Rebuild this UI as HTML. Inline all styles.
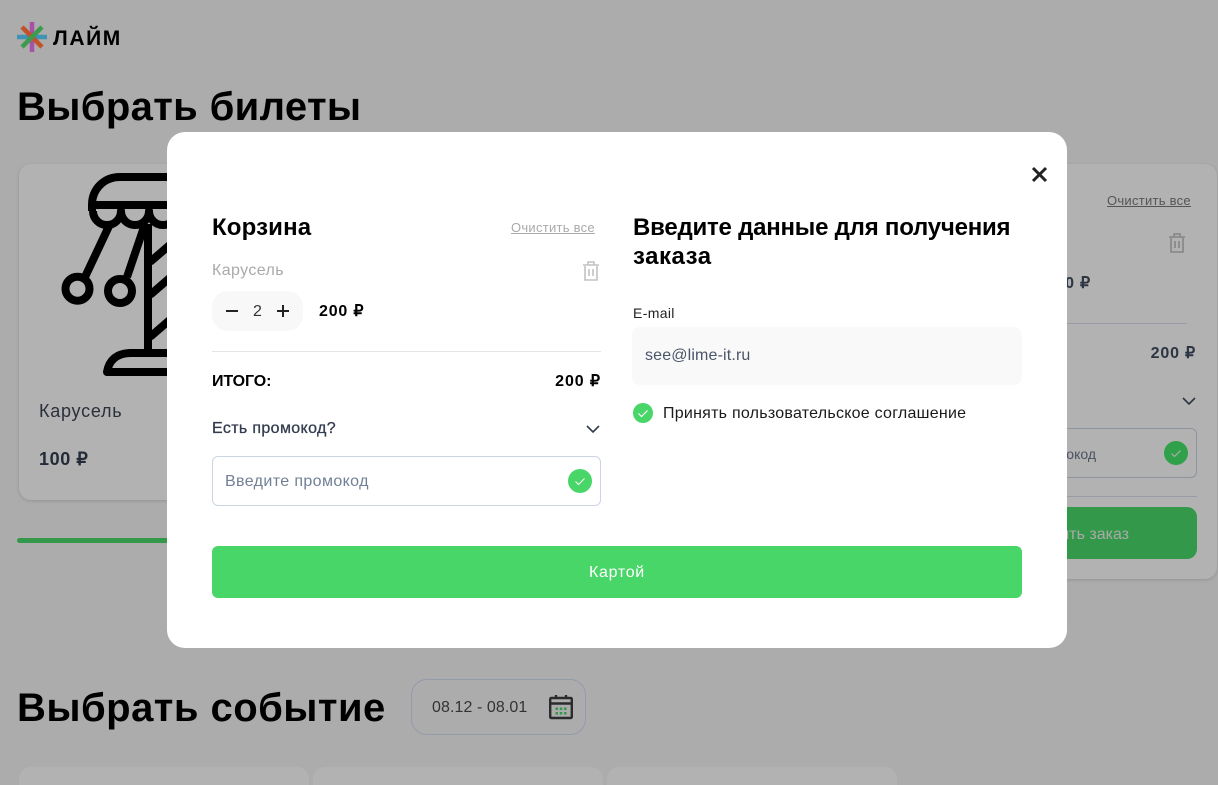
<!DOCTYPE html>
<html lang="ru"><head><meta charset="utf-8"><title>Лайм</title>
<style>
html,body{margin:0;padding:0;height:785px;overflow:hidden}
body{width:1218px;position:relative;background:#acacac;font-family:"Liberation Sans",sans-serif;color:#000}
.t{position:absolute;white-space:nowrap;line-height:1}
.b{position:absolute;box-sizing:border-box}
svg{position:absolute;overflow:visible}
#modal{position:absolute;left:167px;top:132px;width:900px;height:516px;background:#fff;border-radius:18px}
</style></head><body>

<svg style="left:0;top:0" width="60" height="60" viewBox="0 0 60 60"><g fill="none" stroke-width="4.5">
<path d="M32 22V52" stroke="#a851a8"/><path d="M17 37H47" stroke="#3f94b4"/><path d="M22 27L42 47" stroke="#c2522a"/><path d="M22 47L42 27" stroke="#3d9a4e"/></g></svg>
<div class="t" style="left:53px;top:28px;font-size:21px;font-weight:700;letter-spacing:1.6px">ЛАЙМ</div>
<div class="t" style="left:17px;top:87px;font-size:40px;font-weight:700;letter-spacing:.36px">Выбрать билеты</div>

<div class="b" style="left:19px;top:164px;width:300px;height:336px;background:#b2b2b2;border-radius:12px;box-shadow:0 1px 3px rgba(0,0,0,.15)"></div>
<svg style="left:0;top:0" width="180" height="400" viewBox="0 0 180 400"><g fill="none" stroke="#000" stroke-width="8" stroke-linejoin="round">
<path d="M175 177H120C104 177 92 189 92 205V211"/><path d="M92 205H175"/>
<path d="M93 211A14 14 0 0 0 121 211A14 14 0 0 0 149 211A14 14 0 0 0 177 211"/>
<path d="M148 224V351"/><path d="M150 262L172 243M150 295L172 276M150 337L172 318"/>
<path d="M110 224L85 277"/><circle cx="77.5" cy="288.7" r="12"/>
<path d="M145 224L127 277"/><circle cx="120" cy="291" r="12"/>
<path d="M172 353H131C117 353 109 360 107 372H172"/></g></svg>
<div class="t" style="left:39px;top:402px;font-size:18px;color:#2a2f3a;letter-spacing:.75px">Карусель</div>
<div class="t" style="left:39px;top:450px;font-size:18px;font-weight:700;color:#232a38;letter-spacing:.6px">100 ₽</div>
<div class="b" style="left:17px;top:538px;width:160px;height:5px;background:#339849;border-radius:3px"></div>

<div class="b" style="left:1000px;top:164px;width:217px;height:415px;background:#b2b2b2;border-radius:12px;box-shadow:0 1px 3px rgba(0,0,0,.15)"></div>
<div class="t" style="left:1107px;top:194px;font-size:13px;color:#555;text-decoration:underline;letter-spacing:.27px">Очистить все</div>
<svg style="left:1169px;top:233px" width="16" height="20" viewBox="0 0 16 20"><g fill="none" stroke="#858585" stroke-width="1.6"><path d="M2 5V19H14V5M0 4H16M5 4V1H11V4M6 8V15M10 8V15"/></g></svg>
<div class="t" style="right:127px;top:276px;font-size:16px;font-weight:700;color:#2d3542;letter-spacing:.8px">200 ₽</div>
<div class="b" style="left:1060px;top:323px;width:127px;height:1px;background:#989ca4"></div>
<div class="t" style="right:22px;top:346px;font-size:16px;font-weight:700;color:#2d3542;letter-spacing:.8px">200 ₽</div>
<svg style="left:1182px;top:397px" width="14" height="8" viewBox="0 0 14 8"><path d="M1 1L7 7L13 1" fill="none" stroke="#2d3542" stroke-width="1.6"/></svg>
<div class="b" style="left:1040px;top:428px;width:157px;height:50px;border:1px solid #8e949e;border-radius:6px"></div>
<div class="t" style="right:122px;top:447px;font-size:14px;color:#4a5260">Введите промокод</div>
<div class="b" style="left:1164px;top:441px;width:24px;height:24px;border-radius:50%;background:#31a04a"></div>
<svg style="left:1170px;top:449px" width="12" height="9" viewBox="0 0 12 9"><path d="M1.5 4.5L4.5 7.5L10.5 1.5" fill="none" stroke="#b2b2b2" stroke-width="1"/></svg>
<div class="b" style="left:1040px;top:496px;width:157px;height:1px;background:#989ca4"></div>
<div class="b" style="left:1040px;top:507px;width:157px;height:52px;background:#339849;border-radius:10px"></div>
<div class="t" style="right:89px;top:527px;font-size:16px;color:#aaa">Оформить заказ</div>

<div class="t" style="left:17px;top:688px;font-size:40px;font-weight:700;letter-spacing:.47px">Выбрать событие</div>
<div class="b" style="left:411px;top:679px;width:175px;height:56px;border:1px solid #949ba8;border-radius:16px"></div>
<div class="t" style="left:432px;top:700px;font-size:16px;color:#333;letter-spacing:.08px">08.12 - 08.01</div>
<svg style="left:549px;top:694px" width="24" height="26" viewBox="0 0 24 26"><g fill="none" stroke="#2b2b2b" stroke-width="2.4"><rect x="1.2" y="4" width="21.6" height="20" rx="1"/><path d="M1 9.5H23" /><path d="M7 1V5M17 1V5"/></g><path d="M6.500 13.500h2.500v2.500H6.500zM10.750 13.500h2.500v2.500h-2.500zM15 13.500h2.500v2.500H15zM6.500 18h2.500v2.500H6.500zM10.750 18h2.500v2.500h-2.500zM15 18h2.500v2.500H15z" fill="#339849"/></svg>
<div class="b" style="left:19px;top:767px;width:290px;height:18px;background:#b2b2b2;border-radius:12px 12px 0 0"></div>
<div class="b" style="left:313px;top:767px;width:290px;height:18px;background:#b2b2b2;border-radius:12px 12px 0 0"></div>
<div class="b" style="left:607px;top:767px;width:290px;height:18px;background:#b2b2b2;border-radius:12px 12px 0 0"></div>

<div id="modal"></div>

<svg style="left:1032px;top:167px" width="15" height="15" viewBox="0 0 15 15"><path d="M1 1L14 14M14 1L1 14" stroke="#222" stroke-width="3" fill="none"/></svg>

<div class="t" style="left:212px;top:216px;font-size:24px;font-weight:700;letter-spacing:.15px">Корзина</div>
<div class="t" style="left:511px;top:221px;font-size:13px;color:#aaa;text-decoration:underline;letter-spacing:.27px">Очистить все</div>
<div class="t" style="left:212px;top:263px;font-size:16px;color:#aaa;letter-spacing:.4px">Карусель</div>
<svg style="left:583px;top:261px" width="16" height="20" viewBox="0 0 16 20"><g fill="none" stroke="#c2c2c2" stroke-width="1.6"><path d="M2 5V19H14V5M0 4H16M5 4V1H11V4M6 8V15M10 8V15"/></g></svg>
<div class="b" style="left:212px;top:291px;width:91px;height:40px;background:#f8f8f8;border-radius:16px"></div>
<svg style="left:226px;top:305px" width="64" height="12" viewBox="0 0 64 12"><path d="M0 6H12M51 6H63M57 0V12" stroke="#222" stroke-width="2" fill="none"/></svg>
<div class="t" style="left:253px;top:304px;font-size:16px;color:#333">2</div>
<div class="t" style="left:319px;top:304px;font-size:16px;font-weight:700;letter-spacing:.8px">200 ₽</div>
<div class="b" style="left:212px;top:351px;width:389px;height:1px;background:#e5e5e5"></div>
<div class="t" style="left:212px;top:374px;font-size:16px;font-weight:700;letter-spacing:-.1px">ИТОГО:</div>
<div class="t" style="right:617px;top:374px;font-size:16px;font-weight:700;letter-spacing:.9px">200 ₽</div>
<div class="t" style="left:212px;top:421px;font-size:16px;color:#333c4e;-webkit-text-stroke:.3px #333c4e;letter-spacing:.36px">Есть промокод?</div>
<svg style="left:586px;top:425px" width="14" height="8" viewBox="0 0 14 8"><path d="M1 1L7 7L13 1" fill="none" stroke="#333c4e" stroke-width="1.6"/></svg>
<div class="b" style="left:212px;top:456px;width:389px;height:50px;border:1px solid #cbd5e1;border-radius:6px;background:#fff"></div>
<div class="t" style="left:225px;top:474px;font-size:16px;color:#718096;letter-spacing:.38px">Введите промокод</div>
<div class="b" style="left:568px;top:469px;width:24px;height:24px;border-radius:50%;background:#48d668"></div>
<svg style="left:574px;top:477px" width="12" height="9" viewBox="0 0 12 9"><path d="M1.5 4.5L4.5 7.5L10.5 1.5" fill="none" stroke="#fff" stroke-width="1"/></svg>

<div class="t" style="left:633px;top:216px;font-size:24px;font-weight:700;letter-spacing:-.22px">Введите данные для получения</div>
<div class="t" style="left:633px;top:245px;font-size:24px;font-weight:700;letter-spacing:.5px">заказа</div>
<div class="t" style="left:633px;top:306px;font-size:14px;color:#222;letter-spacing:.35px">E-mail</div>
<div class="b" style="left:632px;top:327px;width:390px;height:58px;background:#f9f9f9;border-radius:8px"></div>
<div class="t" style="left:645px;top:348px;font-size:16px;color:#4a5568;letter-spacing:.15px">see@lime-it.ru</div>
<div class="b" style="left:633px;top:403px;width:20px;height:20px;border-radius:50%;background:#48d668"></div>
<svg style="left:637px;top:409px" width="12" height="9" viewBox="0 0 12 9"><path d="M1.5 4.5L4.5 7.5L10.5 1.5" fill="none" stroke="#fff" stroke-width="1.2"/></svg>
<div class="t" style="left:663px;top:406px;font-size:16px;color:#1a1a1a;letter-spacing:.25px">Принять пользовательское соглашение</div>
<div class="b" style="left:212px;top:546px;width:810px;height:52px;background:#48d668;border-radius:6px"></div>
<div class="t" style="left:589px;top:565px;font-size:16px;color:#fff;letter-spacing:.7px">Картой</div>
</body></html>
